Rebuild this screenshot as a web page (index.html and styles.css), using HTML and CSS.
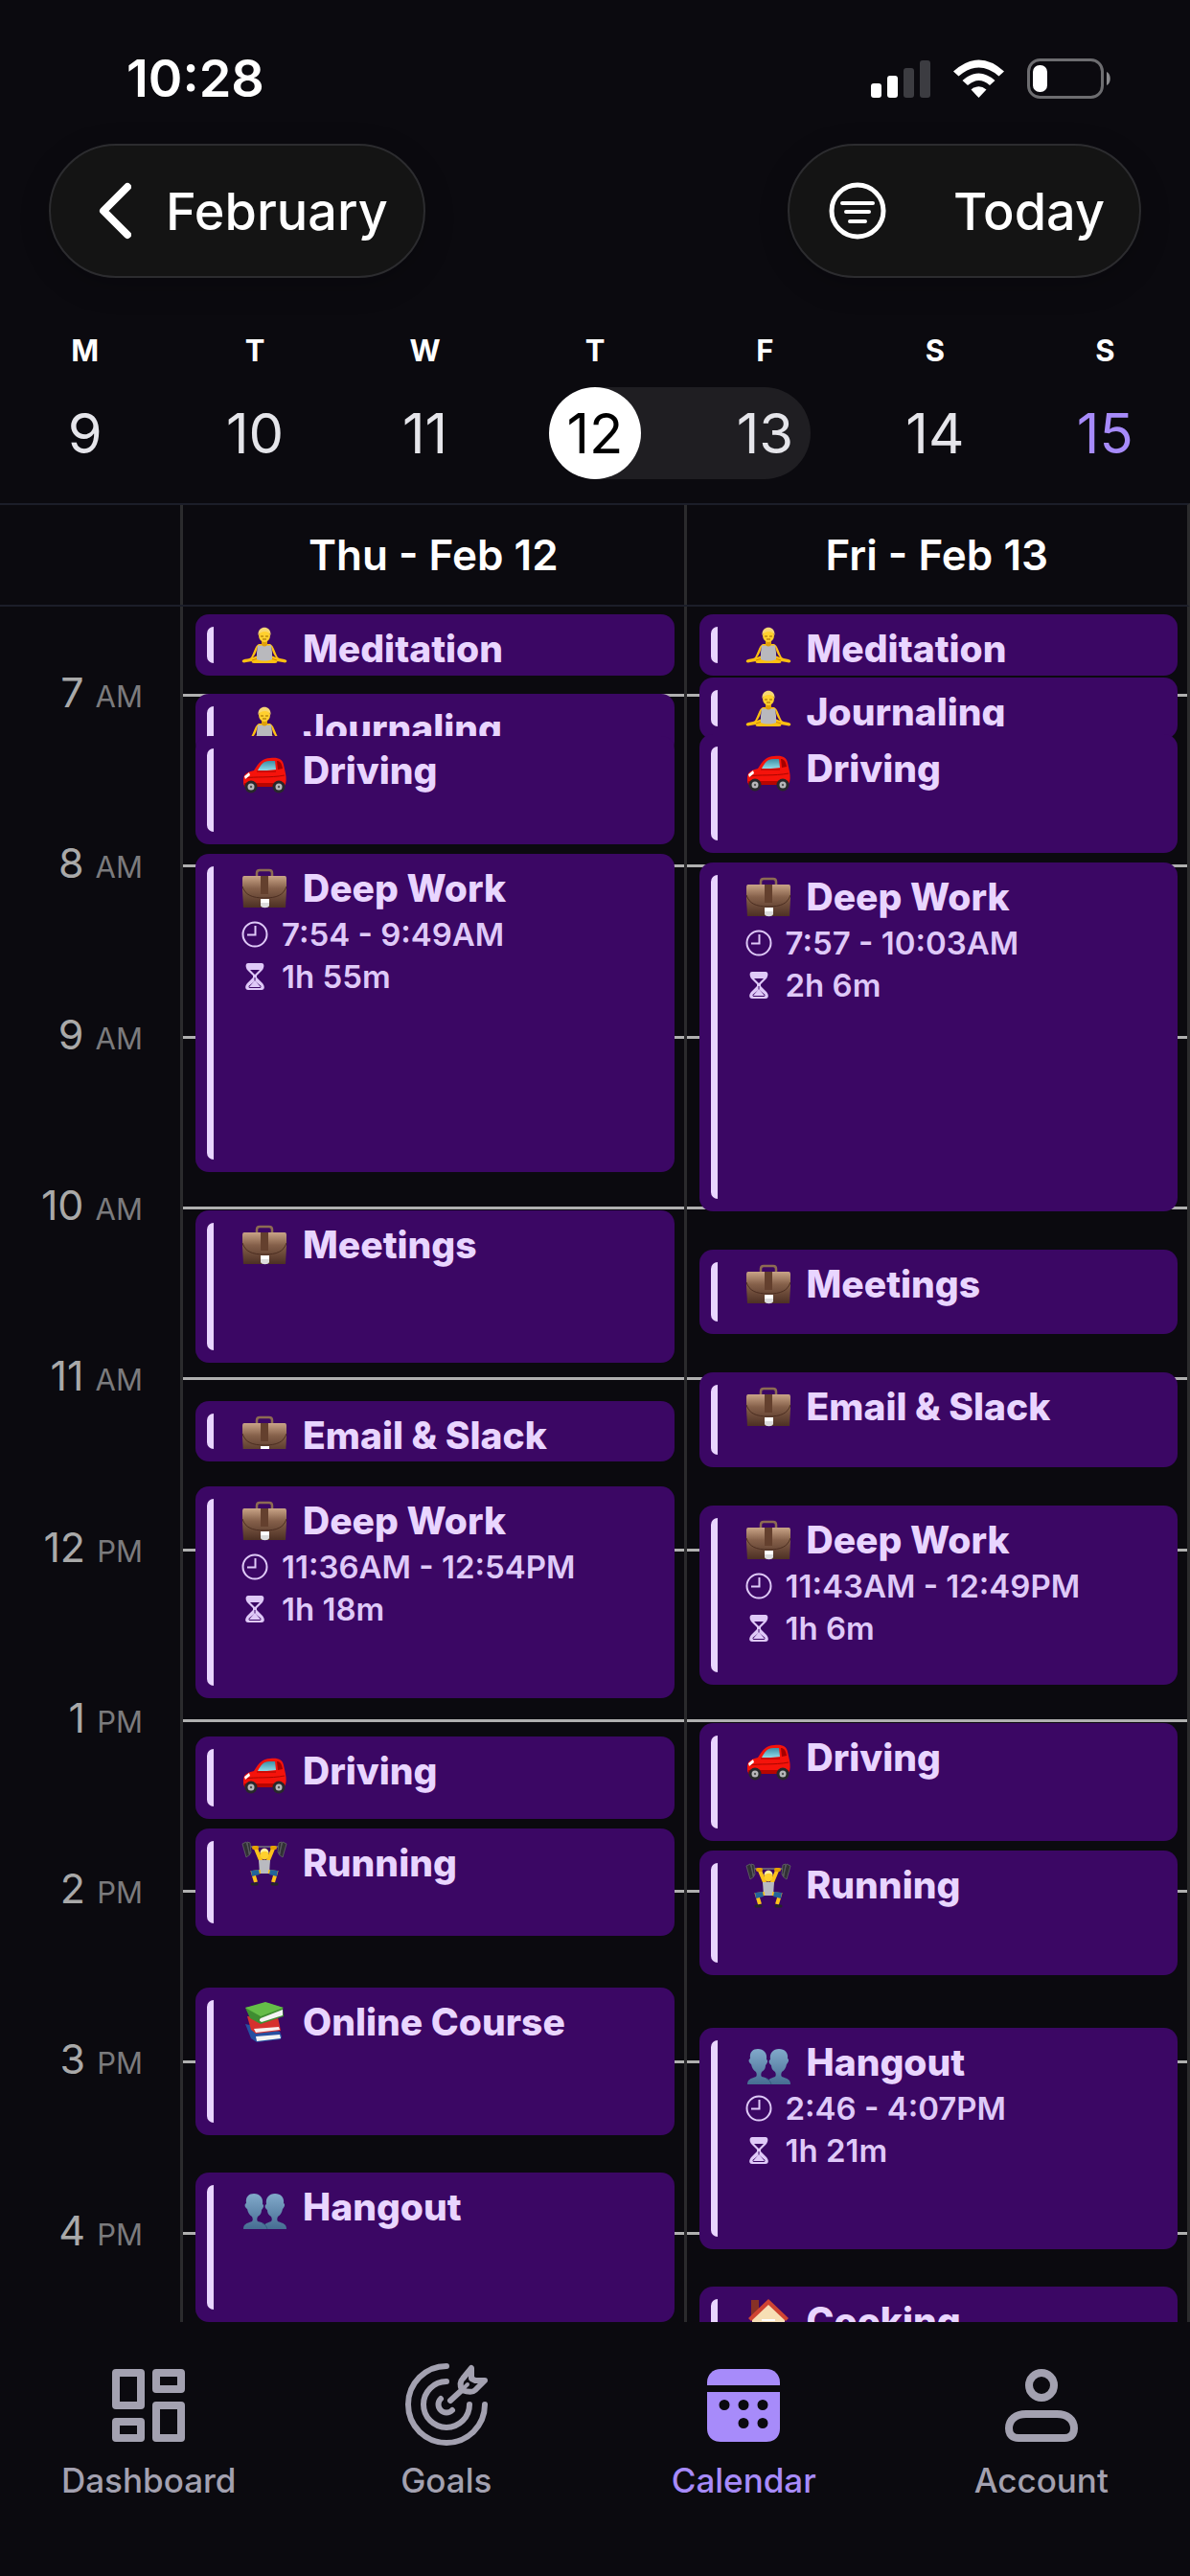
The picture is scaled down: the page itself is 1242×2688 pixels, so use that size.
FILE: index.html
```html
<!DOCTYPE html>
<html lang="en">
<head>
    <meta charset="UTF-8">
    <meta name="viewport" content="width=device-width, initial-scale=1.0">
    <title>Calendar</title>
    <link rel="stylesheet" href="styles.css">
</head>
<body>
    <!-- Shared icons -->
    <svg class="icon-defs" aria-hidden="true">
        <defs>
            <linearGradient id="leather" x1="0" y1="0" x2="0" y2="1">
                <stop offset="0" stop-color="#c9a487"/>
                <stop offset="0.4" stop-color="#85604a"/>
                <stop offset="1" stop-color="#4d3024"/>
            </linearGradient>
            <linearGradient id="bust" x1="0" y1="0" x2="0" y2="1">
                <stop offset="0" stop-color="#82aacb"/>
                <stop offset="1" stop-color="#466d92"/>
            </linearGradient>
            <linearGradient id="glass" x1="0" y1="0" x2="0" y2="1">
                <stop offset="0" stop-color="#3d8fa5"/>
                <stop offset="1" stop-color="#8fdbe8"/>
            </linearGradient>
        </defs>
        <symbol id="meditation" viewBox="0 0 48 48">
            <path d="M18 18c-4 2-5 9-8 14-2 2-7 1-9 3-1 2 1 3 4 2l6-1c-1 1 0 2 2 2h22c2 0 3-1 2-2l6 1c3 1 5 0 4-2-2-2-7-1-9-3-3-5-4-12-8-14z" fill="#fdbf12"/>
            <path d="M17 21c-1 4-2 7-5 11l5-2zM31 21c1 4 2 7 5 11l-5-2z" fill="#3b0764"/>
            <path d="M11 35c8-3 18-3 26 0" fill="none" stroke="#d18b00" stroke-width="1"/>
            <path d="M17 19c2 1 4 1 5 0h4c1 1 3 1 5 0l1 8v7c-5 2-11 2-16 0v-7z" fill="#b9b9bd"/>
            <path d="M21 13h6v6c-2 2-4 2-6 0z" fill="#e0a00a"/>
            <ellipse cx="24" cy="9" rx="6" ry="7" fill="#ffd02e"/>
            <path d="M17.500 9c-1-11 14-11 13 0-1-3-3-4-6-4s-6 1-7 4z" fill="#f7d774"/>
            <path d="M20 10h3M25 10h3M22 13h4" stroke="#9b6500" stroke-width="1"/>
        </symbol>
        <symbol id="car" viewBox="0 0 48 48">
            <path d="M2 33c0-6 3-8 11-10 5-8 9-13 17-13 8-1 13 1 14 7l2 9c1 5 1 10-1 13H4c-2 0-2-3-2-6z" fill="#f5130b"/>
            <path d="M17 23c3-6 6-10 12-10h6l1 9c-6 1-13 1-19 1z" fill="url(#glass)"/>
            <path d="M37 13c3 0 5 2 6 8l-5 1z" fill="#a50000"/>
            <path d="M16 24h20M4 31c10-2 26 0 41-3" stroke="#a80600" stroke-width="1" fill="none"/>
            <path d="M3 29l5-4 1 3-5 4z" fill="#fff"/>
            <path d="M3 36h42v4H3z" fill="#b70500"/>
            <circle cx="10" cy="40" r="6.500" fill="#28282b"/>
            <circle cx="39" cy="40" r="6.500" fill="#28282b"/>
            <circle cx="10" cy="40" r="3.500" fill="#b8b8ba"/>
            <circle cx="39" cy="40" r="3.500" fill="#b8b8ba"/>
            <circle cx="10" cy="40" r="1.200" fill="#555"/>
            <circle cx="39" cy="40" r="1.200" fill="#555"/>
        </symbol>
        <symbol id="briefcase" viewBox="0 0 48 48">
            <path d="M16 11V7c0-2 1-3 3-3h10c2 0 3 1 3 3v4" fill="none" stroke="#8d6b53" stroke-width="2.500"/>
            <path d="M3 10h42c2 0 2 2 2 4v11l-1 18H2L1 25V14c0-2 0-4 2-4z" fill="url(#leather)"/>
            <path d="M1 21c3 9 10 12 23 12s20-3 23-12" fill="none" stroke="#4c2e21" stroke-width="1"/>
            <path d="M20 10h8v19h-8z" fill="#64402e"/>
            <path d="M20 34h9v7c-1 3-8 3-9 0z" fill="#dcdcdc"/>
            <path d="M20 34h9v4h-9z" fill="#fff"/>
        </symbol>
        <symbol id="lifter" viewBox="0 0 48 48">
            <path d="M4 6h40" stroke="#77777c" stroke-width="1.500"/>
            <path d="M15 8l5 12M33 8l-5 12" stroke="#fdc21b" stroke-width="4" stroke-linecap="round"/>
            <path d="M13 7h3M32 7h3" stroke="#e6a100" stroke-width="4" stroke-linecap="round"/>
            <path d="M18 20h12l-1 14H19z" fill="#b9bac0"/>
            <path d="M20 32l-8 1 3 10M28 32l8 1-3 10" stroke="#fdc21b" stroke-width="4" fill="none"/>
            <path d="M10 31l8-1 1 5-8 2zM38 31l-8-1-1 5 8 2z" fill="#23649b"/>
            <path d="M11 45h5M32 45h5" stroke="#252529" stroke-width="3" stroke-linecap="round"/>
            <ellipse cx="24" cy="14" rx="4.500" ry="5.500" fill="#ffd02e"/>
            <path d="M19.500 13c0-7 9-7 9 0-2-3-6-3-9 0z" fill="#fff0a2"/>
            <path d="M1 3l4-2 4 13-4 3zM6 1l3 1 1 10-2 2zM47 3l-4-2-4 13 4 3zM42 1l-3 1-1 10 2 2z" fill="#303034" stroke="#5a5a60" stroke-width="1"/>
        </symbol>
        <symbol id="books" viewBox="0 0 48 48">
            <path d="M4 25l6 15 6 4 25-3 1-3-2-5z" fill="#264fa0"/>
            <path d="M15 38l25-2 1 4-25 3z" fill="#f3f3f3"/>
            <path d="M6 17l4 14 5 4 26-3-3-14z" fill="#d6312e"/>
            <path d="M13 30l26-2 1 3-25 3z" fill="#f7eeee"/>
            <path d="M4 8l5 11 11 6 24-8-1-9L27 3z" fill="#3f8d31"/>
            <path d="M4 8L25 2l19 6-24 9z" fill="#65bd48"/>
            <path d="M20 19l23-9v6l-22 7c-2-1-3-2-1-4z" fill="#f4f4f4"/>
        </symbol>
        <symbol id="people" viewBox="0 0 48 48">
            <path d="M2 46c0-5 3-6 9-8 1-1 1-3 0-5-3-2-4-4-5-8-3-2-3-5-1-6C4 12 8 9 13 9c6 0 10 4 9 11 2 1 1 4-1 6 0 3-1 5-4 7-1 2-1 4 0 5 6 1 8 3 8 8z" fill="url(#bust)"/>
            <path d="M23 46c0-5 2-6 8-8 1-1 1-3 0-5-3-2-4-4-4-7-3-2-3-5-1-6-1-7 3-11 9-11s10 4 9 10c2 1 1 4-1 6-1 4-2 6-5 8-1 2-1 4 0 5 6 2 9 3 9 8z" fill="url(#bust)"/>
            <path d="M22 40c3 1 4 3 5 6" fill="none" stroke="#345b80" stroke-width="1"/>
        </symbol>
        <symbol id="house" viewBox="0 0 48 48">
            <path d="M7 20L24 4l17 16v26H7z" fill="#f7dfb5"/>
            <path d="M6 1h8v13l-8 8z" fill="#873126"/>
            <path d="M3 20L24 0l21 20-3 3L24 6 6 23z" fill="#cf4432"/>
            <path d="M19 24h10v12H19z" fill="#7fc4e8"/>
            <path d="M17 21h14v2H17z" fill="#fff"/>
        </symbol>
        <symbol id="clock" viewBox="0 0 28 28">
            <g fill="none" stroke="currentColor" stroke-width="2">
                <circle cx="14" cy="14" r="12.500"/>
                <path d="M14.500 5v9.500H6"/>
            </g>
        </symbol>
        <symbol id="hourglass" viewBox="0 0 28 28">
            <path d="M7 0h14c3 0 3 4 1 7l-6 6v2l6 6c3 4 2 7-1 7H7c-3 0-4-3-1-7l6-6v-2L6 7C4 4 4 0 7 0z" fill="currentColor"/>
            <path d="M9 7h10l-5 5zM13.500 15h1v4l6 5c0 2-1 2-2 2h-9c-1 0-2 0-2-2l6-5z" fill="#3b0764"/>
            <path d="M14 18l6 7H8z" fill="currentColor"/>
        </symbol>
    </svg>

    <div class="app">
        <header>
            <div class="status-bar">
                <span class="time">10:28</span>
                <div class="status-icons">
                    <svg width="62" height="40" viewBox="0 0 62 40">
                        <rect x="0" y="25" width="11" height="15" rx="3" fill="#fff"/>
                        <rect x="17" y="17" width="11" height="23" rx="3" fill="#fff"/>
                        <rect x="34" y="9" width="11" height="31" rx="3" fill="#3c3c41"/>
                        <rect x="51" y="1" width="11" height="39" rx="3" fill="#3c3c41"/>
                    </svg>
                    <svg width="53" height="40" viewBox="0 0 53 40" fill="#fff">
                        <path d="M0 12.500Q26.500-11.500 53 12.500L47.500 17.500Q26.500-.5 5.500 17.500z"/>
                        <path d="M9.500 22Q26.500 7 43.500 22L38 27Q26.500 17 15 27z"/>
                        <path d="M18.500 31.500Q26.500 25 34.500 31.500L26.500 40z"/>
                    </svg>
                    <svg width="87" height="42" viewBox="0 0 87 42">
                        <rect x="1.500" y="1.500" width="77" height="39" rx="12" fill="none" stroke="#6d6d70" stroke-width="3"/>
                        <rect x="6" y="7" width="15" height="28" rx="7" fill="#fff"/>
                        <path d="M83 14c5 2 5 12 0 14z" fill="#8a8a8d"/>
                    </svg>
                </div>
            </div>

            <div class="toolbar">
                <button type="button" class="pill month-button">
                    <svg width="34" height="60" viewBox="0 0 34 60" fill="none" stroke="#fff" stroke-width="8" stroke-linecap="round" stroke-linejoin="round">
                        <path d="M30 5L5 30l25 25"/>
                    </svg>
                    February
                </button>
                <div class="pill actions">
                    <button type="button" aria-label="Filter">
                        <svg width="60" height="60" viewBox="0 0 60 60" fill="none" stroke="#fff" stroke-width="4" stroke-linecap="round">
                            <circle cx="30" cy="30" r="27" stroke-width="5"/>
                            <path d="M14 22h32M18 31h24M22 41h16"/>
                        </svg>
                    </button>
                    <button type="button">Today</button>
                </div>
            </div>

            <div class="week">
                <span class="weekday">M</span>
                <span class="weekday">T</span>
                <span class="weekday">W</span>
                <span class="weekday">T</span>
                <span class="weekday">F</span>
                <span class="weekday">S</span>
                <span class="weekday">S</span>
                <div class="range"></div>
                <button type="button" class="date d1">9</button>
                <button type="button" class="date d2">10</button>
                <button type="button" class="date d3">11</button>
                <button type="button" class="date d4 selected">12</button>
                <button type="button" class="date d5">13</button>
                <button type="button" class="date d6">14</button>
                <button type="button" class="date d7 today">15</button>
            </div>

            <div class="day-heads">
                <div></div>
                <h2>Thu - Feb 12</h2>
                <h2>Fri - Feb 13</h2>
            </div>
        </header>

        <main class="timeline">
            <div class="hours">
                <div>7 <small>AM</small></div>
                <div>8 <small>AM</small></div>
                <div>9 <small>AM</small></div>
                <div>10 <small>AM</small></div>
                <div>11 <small>AM</small></div>
                <div>12 <small>PM</small></div>
                <div>1 <small>PM</small></div>
                <div>2 <small>PM</small></div>
                <div>3 <small>PM</small></div>
                <div>4 <small>PM</small></div>
            </div>
            <div class="hour-lines">
                <i></i><i></i><i></i><i></i><i></i><i></i><i></i><i></i><i></i><i></i>
            </div>

            <!-- Thursday -->
            <section class="day">
                <article class="event" style="top: 8px; height: 64px">
                    <div class="event-body">
                        <h3><svg class="emoji"><use href="#meditation"/></svg>Meditation</h3>
                    </div>
                </article>
                <article class="event" style="top: 91px; height: 64px">
                    <div class="event-body">
                        <h3><svg class="emoji"><use href="#meditation"/></svg>Journaling</h3>
                    </div>
                </article>
                <article class="event" style="top: 135px; height: 113px">
                    <div class="event-body">
                        <h3><svg class="emoji"><use href="#car"/></svg>Driving</h3>
                    </div>
                </article>
                <article class="event" style="top: 258px; height: 332px">
                    <div class="event-body">
                        <h3><svg class="emoji"><use href="#briefcase"/></svg>Deep Work</h3>
                        <p><svg class="icon"><use href="#clock"/></svg>7:54 - 9:49AM</p>
                        <p><svg class="icon"><use href="#hourglass"/></svg>1h 55m</p>
                    </div>
                </article>
                <article class="event" style="top: 630px; height: 159px">
                    <div class="event-body">
                        <h3><svg class="emoji"><use href="#briefcase"/></svg>Meetings</h3>
                    </div>
                </article>
                <article class="event" style="top: 829px; height: 63px">
                    <div class="event-body">
                        <h3><svg class="emoji"><use href="#briefcase"/></svg>Email &amp; Slack</h3>
                    </div>
                </article>
                <article class="event" style="top: 918px; height: 221px">
                    <div class="event-body">
                        <h3><svg class="emoji"><use href="#briefcase"/></svg>Deep Work</h3>
                        <p><svg class="icon"><use href="#clock"/></svg>11:36AM - 12:54PM</p>
                        <p><svg class="icon"><use href="#hourglass"/></svg>1h 18m</p>
                    </div>
                </article>
                <article class="event" style="top: 1179px; height: 86px">
                    <div class="event-body">
                        <h3><svg class="emoji"><use href="#car"/></svg>Driving</h3>
                    </div>
                </article>
                <article class="event" style="top: 1275px; height: 112px">
                    <div class="event-body">
                        <h3><svg class="emoji"><use href="#lifter"/></svg>Running</h3>
                    </div>
                </article>
                <article class="event" style="top: 1441px; height: 154px">
                    <div class="event-body">
                        <h3><svg class="emoji"><use href="#books"/></svg>Online Course</h3>
                    </div>
                </article>
                <article class="event" style="top: 1634px; height: 156px">
                    <div class="event-body">
                        <h3><svg class="emoji"><use href="#people"/></svg>Hangout</h3>
                    </div>
                </article>
            </section>

            <!-- Friday -->
            <section class="day">
                <article class="event" style="top: 8px; height: 64px">
                    <div class="event-body">
                        <h3><svg class="emoji"><use href="#meditation"/></svg>Meditation</h3>
                    </div>
                </article>
                <article class="event" style="top: 74px; height: 64px">
                    <div class="event-body">
                        <h3><svg class="emoji"><use href="#meditation"/></svg>Journaling</h3>
                    </div>
                </article>
                <article class="event" style="top: 133px; height: 124px">
                    <div class="event-body">
                        <h3><svg class="emoji"><use href="#car"/></svg>Driving</h3>
                    </div>
                </article>
                <article class="event" style="top: 267px; height: 364px">
                    <div class="event-body">
                        <h3><svg class="emoji"><use href="#briefcase"/></svg>Deep Work</h3>
                        <p><svg class="icon"><use href="#clock"/></svg>7:57 - 10:03AM</p>
                        <p><svg class="icon"><use href="#hourglass"/></svg>2h 6m</p>
                    </div>
                </article>
                <article class="event" style="top: 671px; height: 88px">
                    <div class="event-body">
                        <h3><svg class="emoji"><use href="#briefcase"/></svg>Meetings</h3>
                    </div>
                </article>
                <article class="event" style="top: 799px; height: 99px">
                    <div class="event-body">
                        <h3><svg class="emoji"><use href="#briefcase"/></svg>Email &amp; Slack</h3>
                    </div>
                </article>
                <article class="event" style="top: 938px; height: 187px">
                    <div class="event-body">
                        <h3><svg class="emoji"><use href="#briefcase"/></svg>Deep Work</h3>
                        <p><svg class="icon"><use href="#clock"/></svg>11:43AM - 12:49PM</p>
                        <p><svg class="icon"><use href="#hourglass"/></svg>1h 6m</p>
                    </div>
                </article>
                <article class="event" style="top: 1165px; height: 123px">
                    <div class="event-body">
                        <h3><svg class="emoji"><use href="#car"/></svg>Driving</h3>
                    </div>
                </article>
                <article class="event" style="top: 1298px; height: 130px">
                    <div class="event-body">
                        <h3><svg class="emoji"><use href="#lifter"/></svg>Running</h3>
                    </div>
                </article>
                <article class="event" style="top: 1483px; height: 231px">
                    <div class="event-body">
                        <h3><svg class="emoji"><use href="#people"/></svg>Hangout</h3>
                        <p><svg class="icon"><use href="#clock"/></svg>2:46 - 4:07PM</p>
                        <p><svg class="icon"><use href="#hourglass"/></svg>1h 21m</p>
                    </div>
                </article>
                <article class="event" style="top: 1753px; height: 120px">
                    <div class="event-body">
                        <h3><svg class="emoji"><use href="#house"/></svg>Cooking</h3>
                    </div>
                </article>
            </section>
        </main>

        <nav>
            <a href="#dashboard">
                <svg viewBox="0 0 96 96" fill="none" stroke="currentColor" stroke-width="8" stroke-linejoin="round">
                    <path d="M14 14h26v34H14zM56 14h26v17H56zM56 48h26v34H56zM14 65h26v17H14z"/>
                </svg>
                Dashboard
            </a>
            <a href="#goals">
                <svg viewBox="8 12 96 96" fill="none" stroke="currentColor" stroke-width="6" stroke-linecap="round" stroke-linejoin="round">
                    <path d="M56 19a40 40 0 1 0 40 40"/>
                    <path d="M56 35a24 24 0 1 0 24 24"/>
                    <path d="M50 53a8 8 0 1 0 12 12"/>
                    <path d="M60 55l12-11M72 44c-2-5-2-9 1-12l9-11v11l4 2h10L86 44c-3 3-8 2-14 0z"/>
                    <path d="M72 44l6-6" stroke-width="4"/>
                </svg>
                Goals
            </a>
            <a href="#calendar" class="active">
                <svg viewBox="0 0 96 96" fill="currentColor">
                    <path d="M10 27v-3c0-8 6-14 14-14h48c8 0 14 6 14 14v3z"/>
                    <path fill-rule="evenodd" d="M10 34h76v38c0 9-6 14-14 14H24c-8 0-14-5-14-14zM28 42a5 5 0 1 0 0 11a5 5 0 1 0 0-11zM48 42a5 5 0 1 0 0 11a5 5 0 1 0 0-11zM68 42a5 5 0 1 0 0 11a5 5 0 1 0 0-11zM48 61a5 5 0 1 0 0 11a5 5 0 1 0 0-11zM68 61a5 5 0 1 0 0 11a5 5 0 1 0 0-11z"/>
                </svg>
                Calendar
            </a>
            <a href="#account">
                <svg viewBox="0 0 96 96" fill="none" stroke="currentColor" stroke-width="8">
                    <circle cx="48" cy="27" r="13"/>
                    <path d="M32 57h32c11 0 18 6 18 15 0 7-4 10-10 10H24c-6 0-10-3-10-10 0-9 7-15 18-15z"/>
                </svg>
                Account
            </a>
        </nav>
    </div>
</body>
</html>
```
FILE: styles.css
```css
/* Basic Reset */
* {
    margin: 0;
    padding: 0;
    box-sizing: border-box;
}

body {
    font-family: Inter, "Liberation Sans", sans-serif;
    background-color: #0b0a0f;
    color: #fff;
}

button {
    background: none;
    border: none;
    color: inherit;
    font: inherit;
    cursor: pointer;
}

svg {
    display: block;
    flex: none;
}

.icon-defs {
    position: absolute;
    width: 0;
    height: 0;
}

.app {
    display: flex;
    flex-direction: column;
    height: 100vh;
}

/* Status bar */
.status-bar {
    display: flex;
    justify-content: space-between;
    align-items: center;
    padding: 50px 83px 36px 132px;
}

.time {
    font-size: 54px;
    font-weight: 600;
    line-height: 64px;
}

.status-icons {
    display: flex;
    align-items: center;
    gap: 24px;
}

/* Month and filter buttons */
.toolbar {
    display: flex;
    justify-content: space-between;
    padding: 0 51px;
    font-size: 54px;
    font-weight: 500;
}

.pill {
    display: flex;
    align-items: center;
    height: 140px;
    background-color: #141414;
    border: 2px solid #2c2c2f;
    border-radius: 70px;
    box-shadow: 0 8px 32px rgba(0, 0, 0, 0.2);
}

.month-button {
    gap: 36px;
    padding: 0 37px 0 50px;
}

.actions {
    gap: 70px;
    padding: 0 36px 0 41px;
}

/* Week strip */
.week {
    display: grid;
    grid-template-columns: repeat(7, 1fr);
    grid-template-rows: 40px 96px;
    row-gap: 18px;
    justify-items: center;
    padding: 56px 0 25px;
}

.weekday {
    font-size: 31px;
    font-weight: 700;
    line-height: 40px;
}

.date {
    grid-row: 2;
    width: 96px;
    border-radius: 50%;
    font-size: 58px;
    color: #e5e5ea;
}

.d1 { grid-column: 1; }
.d2 { grid-column: 2; }
.d3 { grid-column: 3; }
.d4 { grid-column: 4; }
.d5 { grid-column: 5; }
.d6 { grid-column: 6; }
.d7 { grid-column: 7; }

.date.selected {
    background-color: #fff;
    color: #000;
}

.date.today {
    color: #a78bfa;
}

.range {
    grid-row: 2;
    grid-column: 4 / 6;
    justify-self: stretch;
    margin: 0 41px;
    background-color: #1f1e22;
    border-radius: 48px;
}

/* Day columns */
.day-heads,
.timeline {
    display: grid;
    grid-template-columns: 188px 1fr 1fr;
    border-right: 3px solid #2b2b2d;
}

.day-heads {
    border-top: 2px solid #1c1e29;
    border-bottom: 2px solid #1c1e29;
}

.day-heads h2 {
    border-left: 3px solid #2b2b2d;
    font-size: 44px;
    font-weight: 600;
    line-height: 104px;
    text-align: center;
}

.timeline {
    position: relative;
    flex: 1;
    min-height: 0;
    overflow: hidden;
}

.hours,
.hour-lines {
    display: grid;
    grid-template-rows: repeat(10, 1fr);
    height: 1783px;
}

.hours {
    margin-top: 65px;
    padding-right: 39px;
    font-size: 43px;
    line-height: 48px;
    text-align: right;
    color: #a9a9a9;
}

.hours small {
    font-size: 31px;
    color: #7b7b7d;
}

.hour-lines {
    position: absolute;
    top: 91px;
    left: 188px;
    right: 0;
}

.hour-lines i {
    border-top: 3px solid #b0b0b0;
}

.day {
    position: relative;
    border-left: 3px solid #2b2b2d;
}

/* Events */
.event {
    position: absolute;
    left: 13px;
    right: 10px;
    padding: 13px 12px;
    background-color: #3b0764;
    border-radius: 14px;
    color: #e9d5ff;
}

.event-body {
    height: 100%;
    padding-left: 29px;
    overflow: hidden;
    border-left: 7px solid #e9d5ff;
    border-radius: 7px 0 0 7px;
}

.event h3 {
    display: flex;
    gap: 16px;
    height: 49px;
    font-size: 39px;
    font-weight: 800;
    line-height: 46px;
}

.emoji {
    width: 48px;
    height: 48px;
}

.event p {
    display: flex;
    align-items: center;
    gap: 14px;
    font-size: 33px;
    font-weight: 600;
    line-height: 44px;
    color: #dfc9f8;
}

.icon {
    width: 28px;
    height: 28px;
}

/* Bottom navigation */
nav {
    display: grid;
    grid-template-columns: repeat(4, 1fr);
    padding: 39px 0 77px;
}

nav a {
    display: flex;
    flex-direction: column;
    align-items: center;
    gap: 8px;
    font-size: 35px;
    font-weight: 500;
    line-height: 45px;
    text-decoration: none;
    color: #a3a1b0;
}

nav a.active {
    color: #a78bfa;
}

nav svg {
    width: 96px;
    height: 96px;
}
```
